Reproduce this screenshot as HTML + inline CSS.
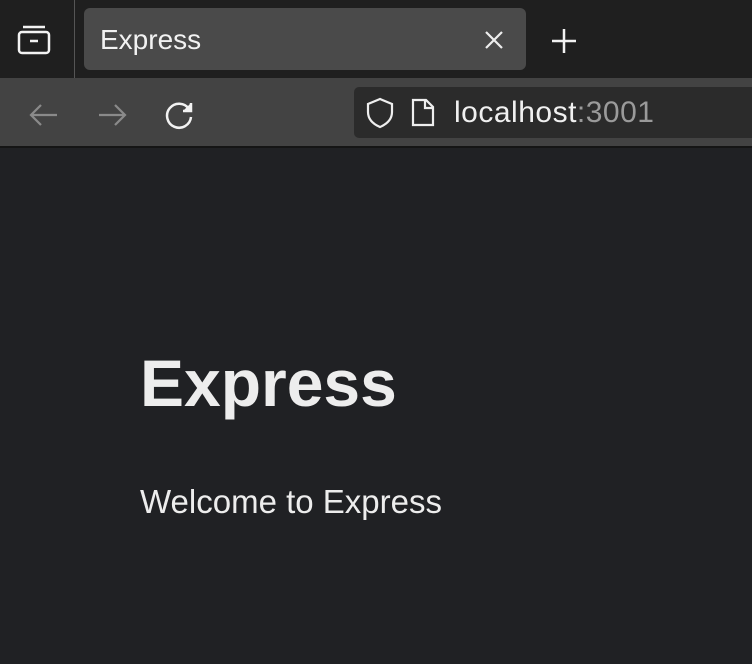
<!DOCTYPE html><html><head><style>
body{margin:0;width:752px;height:664px;background:#202124;font-family:"Liberation Sans",sans-serif;overflow:hidden;position:relative}
.strip{position:absolute;left:0;top:0;width:752px;height:78px;background:#1f1f1f}
.sep{position:absolute;left:74px;top:0;width:1px;height:78px;background:#555}
.tab{position:absolute;left:84px;top:8px;width:442px;height:62px;background:#4a4a4a;border-radius:6px}
.tab span{position:absolute;left:16px;top:16px;font-size:28px;color:#f2f2f2}
.tb{position:absolute;left:0;top:78px;width:752px;height:68px;background:#434343}
.line{position:absolute;left:0;top:146px;width:752px;height:2px;background:#151515}
.url{position:absolute;left:354px;top:87px;width:400px;height:51px;background:#2b2b2b;border-radius:5px 0 0 5px}
.url span{position:absolute;left:100px;top:9px;font-size:30px;color:#f0f0f0;letter-spacing:0.5px}
h1{position:absolute;left:140px;top:345px;margin:0;font-size:66px;font-weight:bold;color:#ededed}
p{position:absolute;left:140px;top:483px;margin:0;font-size:33px;color:#ededed}
</style></head><body>
<div class="strip"></div><div class="sep"></div>
<svg style="position:absolute;left:17px;top:24px" width="36" height="32" fill="none" stroke="#f2f2f2" stroke-width="2.5"><rect x="2" y="8" width="30" height="21" rx="3"/><path d="M6 3h22"/><path d="M13 17h8"/></svg>
<div class="tab"><span>Express</span>
<svg style="position:absolute;left:400px;top:22px" width="20" height="20" stroke="#eee" stroke-width="2.2"><path d="M2 2L18 18M18 2L2 18"/></svg></div>
<svg style="position:absolute;left:550px;top:27px" width="28" height="28" stroke="#f2f2f2" stroke-width="2.5"><path d="M14 2v24M2 14h24"/></svg>
<div class="tb"></div><div class="line"></div>
<svg style="position:absolute;left:28px;top:100px" width="32" height="30" fill="none" stroke="#8a8a8a" stroke-width="2.2"><path d="M3 15h26M13 5L3 15l10 10"/></svg>
<svg style="position:absolute;left:96px;top:100px" width="32" height="30" fill="none" stroke="#8a8a8a" stroke-width="2.2"><path d="M3 15h26M19 5l10 10-10 10"/></svg>
<svg style="position:absolute;left:164px;top:99px" width="32" height="32" fill="none" stroke="#f2f2f2" stroke-width="2.5"><path d="M25 10A12 12 0 1 0 27 18"/><path d="M27 4v8h-8" fill="#f2f2f2"/></svg>
<div class="url"><span>localhost<span style="position:static;color:#9a9a9a">:3001</span></span>
<svg style="position:absolute;left:10px;top:10px" width="32" height="32" fill="none" stroke="#eee" stroke-width="2.2"><path d="M16 2L4 7v8c0 7 5 12 12 15 7-3 12-8 12-15V7z"/></svg>
<svg style="position:absolute;left:55px;top:11px" width="28" height="30" fill="none" stroke="#eee" stroke-width="2.2"><path d="M4 2h13l7 7v18H4z"/><path d="M16 2v8h8"/></svg></div>
<h1>Express</h1>
<p>Welcome to Express</p>
</body></html>
